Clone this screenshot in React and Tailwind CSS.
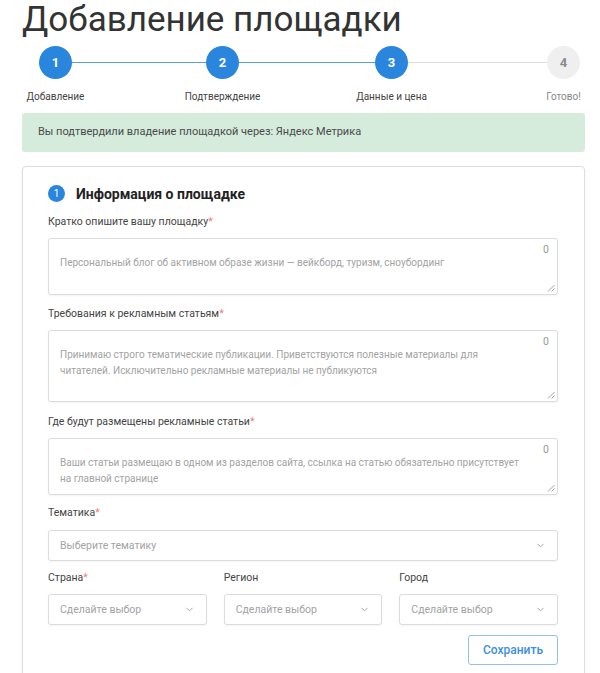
import { ChevronDown } from "lucide-react";

const steps = [
    { n: 1, label: "Добавление", done: true },
    { n: 2, label: "Подтверждение", done: true },
    { n: 3, label: "Данные и цена", done: true },
    { n: 4, label: "Готово!", done: false },
];

const lines = [
    { w: "w-[134px]", active: true },
    { w: "w-[136px]", active: true },
    { w: "w-[139px]", active: false },
];

function Step({ step }) {
    return (
        <div className="flex w-[33px] flex-col items-center">
            <div
                className={
                    step.done
                        ? "flex h-[33px] w-[33px] items-center justify-center rounded-full bg-[#2a86dc] text-[13px] font-bold text-white"
                        : "flex h-[33px] w-[33px] items-center justify-center rounded-full bg-[#efefef] text-[13px] font-bold text-[#8a8a8a]"
                }
            >
                {step.n}
            </div>
            <div className={"mt-[12px] whitespace-nowrap text-[10px] leading-[12px] " + (step.done ? "text-[#444]" : "text-[#888]")}>
                {step.label}
            </div>
        </div>
    );
}

function Label({ text, required, className = "" }) {
    return (
        <div className={"text-[10.5px] leading-[13px] text-[#444] " + className}>
            {text}
            {required && <span className="text-[#f07a7a]">*</span>}
        </div>
    );
}

function ResizeHandle() {
    return (
        <svg className="absolute bottom-[2px] right-[2px]" width="8" height="8" viewBox="0 0 8 8">
            <line x1="1" y1="7.5" x2="7.5" y2="1" stroke="#9a9a9a" strokeWidth="0.9" />
            <line x1="4.5" y1="7.5" x2="7.5" y2="4.5" stroke="#9a9a9a" strokeWidth="0.9" />
        </svg>
    );
}

function TextArea({ height, lines }) {
    return (
        <div className={"relative mt-[10px] rounded-[3px] border border-[#dcdcdc] bg-white pl-[11px] pt-[16px] shadow-[0_1px_2px_rgba(0,0,0,0.05)] " + height}>
            <span className="absolute right-[8px] top-[4px] text-[10.5px] leading-[14px] text-[#999]">0</span>
            {lines.map((l, i) => (
                <div key={i} className="whitespace-nowrap text-[10px] leading-[16px] text-[#a3a3a3]">{l}</div>
            ))}
            <ResizeHandle />
        </div>
    );
}

function Select({ text, className = "" }) {
    return (
        <div className={"flex h-[31px] items-center justify-between rounded-[3px] border border-[#dcdcdc] bg-white pl-[11px] pr-[11px] shadow-[0_1px_2px_rgba(0,0,0,0.05)] " + className}>
            <span className="text-[10.5px] text-[#a3a3a3]">{text}</span>
            <ChevronDown size={11} strokeWidth={2} className="text-[#a0a0a0]" />
        </div>
    );
}

export default function App() {
    return (
        <div className="min-h-[673px] w-[600px] bg-white font-['Roboto',sans-serif]">
            <h1 className="pl-[22px] text-[35px] font-normal leading-[40px] text-[#333]">Добавление площадки</h1>

            <div className="mt-[6px] ml-[39px] flex items-start">
                {steps.map((s, i) => (
                    <div key={s.n} className="flex items-start">
                        <Step step={s} />
                        {i < lines.length && (
                            <div className={"mt-[16px] h-px " + lines[i].w + (lines[i].active ? " bg-[#5a9de0]" : " bg-[#dedede]")} />
                        )}
                    </div>
                ))}
            </div>

            <div className="ml-[22px] mt-[10px] flex h-[39px] w-[563px] items-center rounded-[3px] bg-[#d5ecdc] pl-[16px] text-[11px] text-[#4a4a4a]">
                Вы подтвердили владение площадкой через: Яндекс Метрика
            </div>

            <div className="ml-[22px] mt-[14px] w-[563px] rounded-[4px] border border-[#dedede] bg-white pb-[12px] pl-[25px] pr-[26px] pt-[18px] shadow-[0_1px_3px_rgba(0,0,0,0.06)]">
                <div className="flex items-center">
                    <div className="flex h-[17px] w-[17px] items-center justify-center rounded-full bg-[#2a86dc] text-[10px] text-white">1</div>
                    <div className="ml-[11px] text-[14px] font-bold leading-[16px] text-[#222]">Информация о площадке</div>
                </div>

                <Label text="Кратко опишите вашу площадку" required className="mt-[13px]" />
                <TextArea height="h-[57px]" lines={["Персональный блог об активном образе жизни — вейкборд, туризм, сноубординг"]} />

                <Label text="Требования к рекламным статьям" required className="mt-[12px]" />
                <TextArea
                    height="h-[72px]"
                    lines={[
                        "Принимаю строго тематические публикации. Приветствуются полезные материалы для",
                        "читателей. Исключительно рекламные материалы не публикуются",
                    ]}
                />

                <Label text="Где будут размещены рекламные статьи" required className="mt-[13px]" />
                <TextArea
                    height="h-[57px]"
                    lines={[
                        "Ваши статьи размещаю в одном из разделов сайта, ссылка на статью обязательно присутствует",
                        "на главной странице",
                    ]}
                />

                <Label text="Тематика" required className="mt-[11px]" />
                <Select text="Выберите тематику" className="mt-[11px]" />

                <div className="mt-[10px] flex gap-[17px]">
                    <div className="flex-1">
                        <Label text="Страна" required />
                        <Select text="Сделайте выбор" className="mt-[10px]" />
                    </div>
                    <div className="flex-1">
                        <Label text="Регион" />
                        <Select text="Сделайте выбор" className="mt-[10px]" />
                    </div>
                    <div className="flex-1">
                        <Label text="Город" />
                        <Select text="Сделайте выбор" className="mt-[10px]" />
                    </div>
                </div>

                <div className="mt-[10px] flex justify-end">
                    <button className="h-[30px] w-[90px] rounded-[3px] border border-[#92c2ec] bg-white text-[12px] font-medium text-[#3d8ee0]">
                        Сохранить
                    </button>
                </div>
            </div>
        </div>
    );
}
